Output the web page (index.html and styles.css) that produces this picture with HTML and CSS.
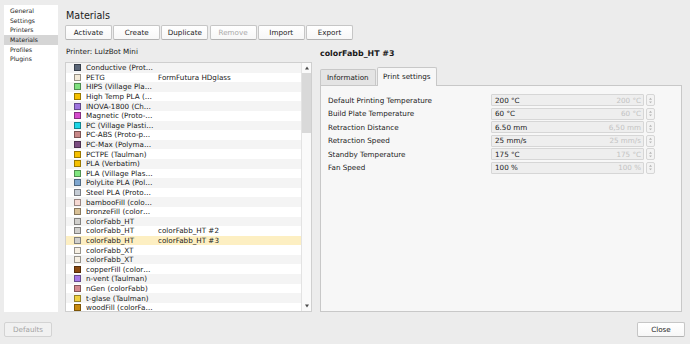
FILE: index.html
```html
<!DOCTYPE html>
<html>
<head>
<meta charset="utf-8">
<link rel="stylesheet" href="styles.css">
</head>
<body>
<div class="app">
  <div class="top">
    <nav class="sidebar">
      <div class="nav-item">General</div>
      <div class="nav-item">Settings</div>
      <div class="nav-item">Printers</div>
      <div class="nav-item active">Materials</div>
      <div class="nav-item">Profiles</div>
      <div class="nav-item">Plugins</div>
    </nav>
    <main class="content">
      <h1 class="title">Materials</h1>
      <div class="toolbar">
        <button class="btn">Activate</button>
        <button class="btn">Create</button>
        <button class="btn">Duplicate</button>
        <button class="btn disabled">Remove</button>
        <button class="btn">Import</button>
        <button class="btn">Export</button>
      </div>
      <div class="split">
        <section class="left">
          <div class="printer">Printer: LulzBot Mini</div>
          <div class="list">
            <div class="rows">
              <div class="row"><span class="sw" style="background:#5a6678"></span><span class="name">Conductive (Prot…</span></div>
              <div class="row"><span class="sw" style="background:#f3ead8"></span><span class="name">PETG</span><span class="brand">FormFutura HDglass</span></div>
              <div class="row"><span class="sw" style="background:#7fe07f"></span><span class="name">HIPS (Village Pla…</span></div>
              <div class="row"><span class="sw" style="background:#f5c000"></span><span class="name">High Temp PLA (…</span></div>
              <div class="row"><span class="sw" style="background:#9e74df"></span><span class="name">INOVA-1800 (Ch…</span></div>
              <div class="row"><span class="sw" style="background:#d54ccd"></span><span class="name">Magnetic (Proto-…</span></div>
              <div class="row"><span class="sw" style="background:#1ed6e6"></span><span class="name">PC (Village Plasti…</span></div>
              <div class="row"><span class="sw" style="background:#c88888"></span><span class="name">PC-ABS (Proto-p…</span></div>
              <div class="row"><span class="sw" style="background:#7a4c80"></span><span class="name">PC-Max (Polyma…</span></div>
              <div class="row"><span class="sw" style="background:#f5c000"></span><span class="name">PCTPE (Taulman)</span></div>
              <div class="row"><span class="sw" style="background:#f5c000"></span><span class="name">PLA (Verbatim)</span></div>
              <div class="row"><span class="sw" style="background:#80e680"></span><span class="name">PLA (Village Plas…</span></div>
              <div class="row"><span class="sw" style="background:#7ea6cf"></span><span class="name">PolyLite PLA (Pol…</span></div>
              <div class="row"><span class="sw" style="background:#c5ccd5"></span><span class="name">Steel PLA (Proto…</span></div>
              <div class="row"><span class="sw" style="background:#f5d8d2"></span><span class="name">bambooFill (colo…</span></div>
              <div class="row"><span class="sw" style="background:#d8c096"></span><span class="name">bronzeFill (color…</span></div>
              <div class="row"><span class="sw" style="background:#d0cfcc"></span><span class="name">colorFabb_HT</span></div>
              <div class="row"><span class="sw" style="background:#d0cfcc"></span><span class="name">colorFabb_HT</span><span class="brand">colorFabb_HT #2</span></div>
              <div class="row selected"><span class="sw" style="background:#d0cfcc"></span><span class="name">colorFabb_HT</span><span class="brand">colorFabb_HT #3</span></div>
              <div class="row"><span class="sw" style="background:#f6efe2"></span><span class="name">colorFabb_XT</span></div>
              <div class="row"><span class="sw" style="background:#f6efe2"></span><span class="name">colorFabb_XT</span></div>
              <div class="row"><span class="sw" style="background:#8a4a10"></span><span class="name">copperFill (color…</span></div>
              <div class="row"><span class="sw" style="background:#a679e6"></span><span class="name">n-vent (Taulman)</span></div>
              <div class="row"><span class="sw" style="background:#d48a90"></span><span class="name">nGen (colorFabb)</span></div>
              <div class="row"><span class="sw" style="background:#f0d040"></span><span class="name">t-glase (Taulman)</span></div>
              <div class="row"><span class="sw" style="background:#c98a0e"></span><span class="name">woodFill (colorFa…</span></div>
            </div>
            <div class="scrollbar">
              <svg class="arrow" viewBox="0 0 10 6" width="10" height="6"><polygon points="3,4.5 7,4.5 5,1.5" fill="#4a4a4a"/></svg>
              <div class="thumb"></div>
              <div class="track"></div>
              <svg class="arrow" viewBox="0 0 10 6" width="10" height="6"><polygon points="3,1.5 7,1.5 5,4.5" fill="#4a4a4a"/></svg>
            </div>
          </div>
        </section>
        <section class="right">
          <div class="mat-title">colorFabb_HT #3</div>
          <div class="tabs">
            <div class="tab">Information</div>
            <div class="tab active">Print settings</div>
          </div>
          <div class="panel">
            <div class="prow"><span class="plabel">Default Printing Temperature</span><div class="field"><span class="val">200 °C</span><span class="ghost">200 °C</span></div><span class="spin"><svg viewBox="0 0 8 11" width="8" height="11"><polygon points="2.3,4.5 5.7,4.5 4,2.3" fill="#b5b5b5"/><polygon points="2.3,6.5 5.7,6.5 4,8.7" fill="#b5b5b5"/></svg></span></div>
            <div class="prow"><span class="plabel">Build Plate Temperature</span><div class="field"><span class="val">60 °C</span><span class="ghost">60 °C</span></div><span class="spin"><svg viewBox="0 0 8 11" width="8" height="11"><polygon points="2.3,4.5 5.7,4.5 4,2.3" fill="#b5b5b5"/><polygon points="2.3,6.5 5.7,6.5 4,8.7" fill="#b5b5b5"/></svg></span></div>
            <div class="prow"><span class="plabel">Retraction Distance</span><div class="field"><span class="val">6.50 mm</span><span class="ghost">6,50 mm</span></div><span class="spin"><svg viewBox="0 0 8 11" width="8" height="11"><polygon points="2.3,4.5 5.7,4.5 4,2.3" fill="#b5b5b5"/><polygon points="2.3,6.5 5.7,6.5 4,8.7" fill="#b5b5b5"/></svg></span></div>
            <div class="prow"><span class="plabel">Retraction Speed</span><div class="field"><span class="val">25 mm/s</span><span class="ghost">25 mm/s</span></div><span class="spin"><svg viewBox="0 0 8 11" width="8" height="11"><polygon points="2.3,4.5 5.7,4.5 4,2.3" fill="#b5b5b5"/><polygon points="2.3,6.5 5.7,6.5 4,8.7" fill="#b5b5b5"/></svg></span></div>
            <div class="prow"><span class="plabel">Standby Temperature</span><div class="field"><span class="val">175 °C</span><span class="ghost">175 °C</span></div><span class="spin"><svg viewBox="0 0 8 11" width="8" height="11"><polygon points="2.3,4.5 5.7,4.5 4,2.3" fill="#b5b5b5"/><polygon points="2.3,6.5 5.7,6.5 4,8.7" fill="#b5b5b5"/></svg></span></div>
            <div class="prow"><span class="plabel">Fan Speed</span><div class="field"><span class="val">100 %</span><span class="ghost">100 %</span></div><span class="spin"><svg viewBox="0 0 8 11" width="8" height="11"><polygon points="2.3,4.5 5.7,4.5 4,2.3" fill="#b5b5b5"/><polygon points="2.3,6.5 5.7,6.5 4,8.7" fill="#b5b5b5"/></svg></span></div>
          </div>
        </section>
      </div>
    </main>
  </div>
  <footer class="bottom">
    <button class="btn small disabled-btn">Defaults</button>
    <button class="btn small">Close</button>
  </footer>
</div>
</body>
</html>
```
FILE: styles.css
```css
* { box-sizing: border-box; }
html, body { margin: 0; padding: 0; }
body {
  width: 690px;
  height: 344px;
  overflow: hidden;
  background: #ececec;
  font-family: "DejaVu Sans", "Liberation Sans", sans-serif;
  font-size: 7.2px;
  color: #1a1a1a;
}
.app { display: flex; flex-direction: column; height: 344px; }
.top { display: flex; height: 316px; }

.sidebar {
  margin: 5px 0 0 4px;
  width: 54px;
  height: 307px;
  background: #fff;
  padding-top: 1px;
  font-size: 6.1px;
}
.nav-item { height: 9.7px; line-height: 9.7px; padding-left: 6px; }
.nav-item.active { background: #d5d5d5; }

.content { margin-left: 7px; padding-top: 9px; display: flex; flex-direction: column; }
.title {
  margin: 0;
  font-size: 9.6px;
  font-weight: normal;
  line-height: 14px;
  height: 14px;
  padding-left: 1px;
  color: #222;
}
.toolbar { display: flex; gap: 1.2px; margin-top: 2px; }
.btn {
  font-family: inherit;
  font-size: 7.2px;
  color: #1a1a1a;
  width: 47px;
  height: 15px;
  padding: 0;
  background: linear-gradient(#ffffff, #f7f7f7);
  border: 1px solid #c6c6c6;
  border-bottom-color: #b2b2b2;
  border-radius: 2px;
  line-height: 13px;
  text-align: center;
}
.btn.disabled { color: #a8a8a8; }

.split { display: flex; gap: 8px; }
.left { width: 247px; display: flex; flex-direction: column; }
.printer { padding: 6px 0 0 1px; height: 18px; line-height: 12px; }
.list {
  margin-top: 4px;
  height: 250px;
  border: 1px solid #cfcfcf;
  background: #fff;
  display: flex;
}
.rows { flex: 1; overflow: hidden; }
.row {
  height: 9.6px;
  display: flex;
  align-items: center;
  padding-left: 8px;
  white-space: nowrap;
}
.row:nth-child(odd) { background: #f4f4f4; }
.row.selected { background: #fdefc2; }
.sw {
  width: 7px;
  height: 7px;
  flex: none;
  margin-right: 5px;
  box-shadow: inset 0 0 0 1px rgba(0,0,0,0.38);
}
.name { width: 72px; flex: none; overflow: hidden; }
.brand { flex: none; }

.scrollbar {
  width: 10px;
  flex: none;
  border-left: 1px solid #e3e3e3;
  background: #fafafa;
  display: flex;
  flex-direction: column;
  align-items: center;
}
.arrow { flex: none; display: block; margin: 2px 0; }
.thumb { width: 9px; height: 60px; background: #d9d9d9; flex: none; }
.track { flex: 1; }

.right { width: 362px; display: flex; flex-direction: column; }
.mat-title { padding-top: 8px; height: 20px; line-height: 12px; font-weight: bold; font-size: 7.9px; color: #1a1a1a; }
.tabs { display: flex; align-items: flex-end; margin-top: 7px; height: 18px; }
.tab {
  height: 16px;
  line-height: 15px;
  padding: 0 6px;
  background: #e4e4e4;
  border: 1px solid #c8c8c8;
  border-bottom: none;
  border-radius: 2px 2px 0 0;
}
.tab + .tab { margin-left: 1px; }
.tab.active {
  height: 19px;
  line-height: 17px;
  padding: 0 5.5px;
  background: #f7f7f7;
  position: relative;
  top: 1px;
  z-index: 1;
}
.panel {
  height: 227px;
  background: #f7f7f7;
  border: 1px solid #c8c8c8;
  padding: 8px 0 0 7px;
  display: flex;
  flex-direction: column;
  gap: 1.6px;
}
.prow { display: flex; align-items: center; height: 12px; }
.plabel { width: 163px; flex: none; }
.field {
  width: 153px;
  height: 12px;
  flex: none;
  display: flex;
  justify-content: space-between;
  align-items: center;
  background: #eeeeee;
  border: 1px solid #d6d6d6;
  border-radius: 1px;
  padding: 0 2px 0 3px;
}
.ghost { color: #c3c3c3; }
.spin {
  margin-left: 2px;
  width: 9px;
  height: 12px;
  border: 1px solid #d6d6d6;
  border-radius: 2px;
  background: #f3f3f3;
  display: flex;
  align-items: center;
  justify-content: center;
}
.spin svg { display: block; }

.bottom {
  display: flex;
  justify-content: space-between;
  padding: 6px 5px 0 4px;
}
.btn.small { width: 48px; }
.btn.disabled-btn { color: #a3a3a3; background: #f1f1f1; border-color: #d3d3d3; }
```
